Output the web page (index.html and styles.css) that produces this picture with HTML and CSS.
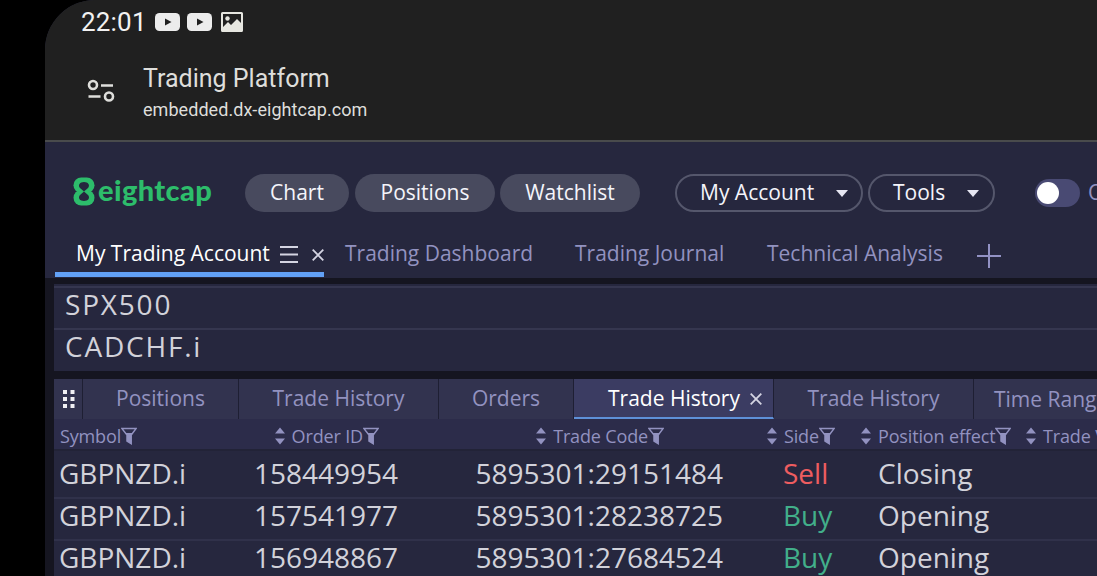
FILE: index.html
```html
<!DOCTYPE html>
<html lang="en">
<head>
  <meta charset="UTF-8">
  <title>Trading Platform</title>
  <link rel="stylesheet" href="styles.css">
</head>
<body>

  <svg class="defs" width="0" height="0">
    <symbol id="filter" viewBox="0 0 16 18">
      <path d="M1 1.6h14L10.2 8v8.6L6 14V8z" fill="none" stroke="currentColor" stroke-width="1.5"/>
      <path d="M4.2 6h7.6L10.2 8.3v8.3L6 14V8.3z" fill="currentColor"/>
    </symbol>
    <symbol id="sort" viewBox="0 0 10 18">
      <path d="M5 .5L10 6.5H0zM5 17.5L10 11.5H0z" fill="currentColor"/>
    </symbol>
    <symbol id="close" viewBox="0 0 12 12">
      <path d="M.7.7l10.6 10.6M11.3.7L.7 11.3" stroke="currentColor" stroke-width="1.8"/>
    </symbol>
    <symbol id="video" viewBox="0 0 25 18">
      <rect width="25" height="18" rx="4.5" fill="#ececec"/>
      <path d="M10 5.5l6.5 3.5-6.5 3.5z" fill="#202020"/>
    </symbol>
  </svg>

  <div class="screen">
    <header class="browser">
      <div class="status">
        <span class="time">22:01</span>
        <svg width="25" height="18"><use href="#video"/></svg>
        <svg width="25" height="18"><use href="#video"/></svg>
        <svg class="photo" width="22" height="20" viewBox="0 0 22 20">
          <path d="M1.5 0h19A1.5 1.5 0 0 1 22 1.5v17A1.5 1.5 0 0 1 20.5 20h-19A1.5 1.5 0 0 1 0 18.5v-17A1.5 1.5 0 0 1 1.5 0zM2 2v13l5-5 3 3 6-6 4 4V2z" fill="#e6e6e0" fill-rule="evenodd"/>
          <circle cx="6.5" cy="6.5" r="2.2" fill="#e6e6e0"/>
        </svg>
      </div>
      <div class="address">
        <svg width="28" height="24" viewBox="0 0 28 24" fill="none" stroke="#dededb" stroke-width="2.6">
          <circle cx="6" cy="6" r="4"/>
          <path d="M14 6.5h12M1.5 17.5h12"/>
          <circle cx="22" cy="17.5" r="4"/>
        </svg>
        <div>
          <div class="page-title">Trading Platform</div>
          <div class="page-url">embedded.dx-eightcap.com</div>
        </div>
      </div>
    </header>

    <nav class="toolbar">
      <div class="logo">
        <svg width="22" height="29" viewBox="0 0 22 29">
          <rect x="0.5" y="0.5" width="21" height="15.5" rx="7.7" fill="#2dbd6b"/>
          <rect x="0.5" y="13" width="21" height="15.5" rx="7.7" fill="#2dbd6b"/>
          <path d="M11 14.5L7 11C4.500 8 7 5 11 5s6.500 3 4 6zM11 14.500L7 18C4.500 21 7 24 11 24s6.500-3 4-6z" fill="#26273e"/>
        </svg>
        <span class="logo-text">eightcap</span>
      </div>
      <div class="pill chart">Chart</div>
      <div class="pill">Positions</div>
      <div class="pill">Watchlist</div>
      <div class="pill outline account">My Account <i class="caret"></i></div>
      <div class="pill outline tools">Tools <i class="caret"></i></div>
      <div class="toggle"></div>
      <span class="toggle-label">O</span>
    </nav>

    <nav class="tabs">
      <div class="tab active">
        <span class="tab-name">My Trading Account</span>
        <svg class="menu" width="18" height="17" viewBox="0 0 18 17" stroke="#d4d4e2" stroke-width="1.8"><path d="M0 1h18M0 8.5h18M0 16h18"/></svg>
        <svg class="close" width="12" height="12"><use href="#close"/></svg>
      </div>
      <div class="tab dashboard">Trading Dashboard</div>
      <div class="tab journal">Trading Journal</div>
      <div class="tab analysis">Technical Analysis</div>
      <svg class="plus" width="24" height="24" viewBox="0 0 24 24" stroke="#9292c4" stroke-width="2"><path d="M12 0v24M0 12h24"/></svg>
    </nav>

    <main class="workspace">
      <section class="panel watchlist">
        <div class="symbol">SPX500</div>
        <div class="symbol">CADCHF.i</div>
      </section>

      <section class="panel history">
        <div class="panel-tabs">
          <div class="panel-tab grip"><svg width="12" height="18" viewBox="0 0 12 18" fill="#f0f0f4"><path d="M0 0h4v4H0zM7.5 0h4v4h-4zM0 7h4v4H0zM7.5 7h4v4h-4zM0 14h4v4H0zM7.5 14h4v4h-4z"/></svg></div>
          <div class="panel-tab positions">Positions</div>
          <div class="panel-tab wide">Trade History</div>
          <div class="panel-tab orders">Orders</div>
          <div class="panel-tab wide active">Trade History <svg width="12" height="12"><use href="#close"/></svg></div>
          <div class="panel-tab wide">Trade History</div>
          <div class="panel-tab range">Time Rang</div>
        </div>

        <div class="grid head">
          <div>Symbol<svg class="filter"><use href="#filter"/></svg></div>
          <div class="num id"><svg class="sort"><use href="#sort"/></svg>Order ID<svg class="filter"><use href="#filter"/></svg></div>
          <div class="num code"><svg class="sort"><use href="#sort"/></svg>Trade Code<svg class="filter"><use href="#filter"/></svg></div>
          <div><svg class="sort"><use href="#sort"/></svg>Side<svg class="filter"><use href="#filter"/></svg></div>
          <div class="effect"><svg class="sort"><use href="#sort"/></svg>Position effect<svg class="filter"><use href="#filter"/></svg></div>
          <div><svg class="sort"><use href="#sort"/></svg>Trade V</div>
        </div>
        <div class="grid row">
          <div>GBPNZD.i</div><div class="num id">158449954</div><div class="num code">5895301:29151484</div><div class="side sell">Sell</div><div class="effect">Closing</div>
        </div>
        <div class="grid row">
          <div>GBPNZD.i</div><div class="num id">157541977</div><div class="num code">5895301:28238725</div><div class="side buy">Buy</div><div class="effect">Opening</div>
        </div>
        <div class="grid row">
          <div>GBPNZD.i</div><div class="num id">156948867</div><div class="num code">5895301:27684524</div><div class="side buy">Buy</div><div class="effect">Opening</div>
        </div>
      </section>
    </main>
  </div>

</body>
</html>
```
FILE: styles.css
```css
* {
  box-sizing: border-box;
}
body {
  margin: 0;
  height: 576px;
  overflow: hidden;
  background: #000;
  font-family: "Open Sans", "Noto Sans", sans-serif;
  white-space: nowrap;
}
svg {
  display: block;
  flex: none;
}
.defs {
  position: absolute;
}
.screen {
  margin-left: 45px;
  height: 576px;
  overflow: hidden;
  background: #26273e;
  border-top-left-radius: 50px;
}

/* browser bar */
.browser {
  height: 142px;
  background: #202020;
  border-bottom: 2px solid #494b4c;
  font-family: Roboto, sans-serif;
  color: #dededb;
}
.status {
  display: flex;
  align-items: center;
  height: 44px;
  padding-left: 36px;
}
.status svg { margin-right: 7px; }
.status .photo { margin-left: 2px; }
.time {
  width: 74px;
  font-size: 26px;
  letter-spacing: 0.2px;
  color: #f2f2f2;
}
.address {
  display: flex;
  padding: 20px 0 0 42px;
}
.address svg {
  margin: 15px 28px 0 0;
}
.page-title {
  font-size: 25px;
  line-height: 30px;
}
.page-url {
  font-size: 18px;
  line-height: 32px;
  letter-spacing: 0.05px;
}

/* toolbar */
.toolbar {
  display: flex;
  align-items: center;
  height: 102px;
  padding-left: 28px;
}
.logo {
  display: flex;
  align-items: center;
  flex: none;
  width: 172px;
  padding-bottom: 4px;
}
.logo-text {
  margin: -3px 0 0 3px;
  font-family: Lato, sans-serif;
  font-size: 29px;
  font-weight: 900;
  letter-spacing: 0.4px;
  color: #2dbd6b;
}
.pill {
  display: flex;
  justify-content: center;
  align-items: center;
  flex: none;
  width: 140px;
  height: 38px;
  margin-right: 5px;
  padding-bottom: 3px;
  border-radius: 19px;
  background: #484a5e;
  color: #f4f4fa;
  font-size: 21px;
}
.pill.chart {
  width: 104px;
  margin-right: 6px;
}
.pill.outline {
  justify-content: space-between;
  background: none;
  border: 2px solid #55576c;
}
.pill.account {
  width: 188px;
  margin-left: 30px;
  padding-left: 23px;
  padding-right: 13px;
}
.pill.tools {
  width: 127px;
  padding-left: 23px;
  padding-right: 14px;
}
.caret {
  margin-top: 3px;
  border: 6px solid transparent;
  border-top: 7px solid #e6e6f2;
  border-bottom: 0;
}
.toggle {
  flex: none;
  width: 45px;
  height: 28px;
  margin: 0 8px 0 35px;
  padding: 3px 2px;
  border-radius: 14px;
  background: #494a73;
}
.toggle::before {
  content: "";
  display: block;
  width: 22px;
  height: 22px;
  border-radius: 50%;
  background: #fff;
}
.toggle-label {
  margin-top: -3px;
  font-size: 21px;
  color: #9292c0;
}

/* page tabs */
.tabs {
  display: flex;
  height: 34px;
  padding-left: 10px;
  font-size: 21px;
  line-height: 18px;
  color: #9292c0;
}
.tab.active {
  display: flex;
  width: 269px;
  height: 33px;
  padding-left: 21px;
  border-bottom: 5px solid #62a1f6;
  color: #fff;
}
.tab-name { width: 204px; }
.menu { margin-top: 2px; }
.tab .close {
  margin: 5px 0 0 14px;
  color: #d4d4e2;
}
.tab.dashboard {
  width: 230px;
  margin-left: 21px;
}
.tab.journal { width: 192px; }
.tab.analysis { width: 210px; }

/* panels */
.workspace {
  height: 298px;
  padding: 6px 0 0 9px;
  background: #151520;
}
.panel {
  background: #26273e;
}
.watchlist {
  height: 87px;
  padding-top: 2px;
  margin-bottom: 8px;
}
.symbol {
  height: 42px;
  padding-left: 11px;
  border-top: 2px solid #35364f;
  font-size: 28px;
  line-height: 33px;
  letter-spacing: 1.8px;
  color: #d2d2da;
}
.panel-tabs {
  display: flex;
  height: 40px;
}
.panel-tab {
  display: flex;
  align-items: center;
  justify-content: center;
  flex: none;
  padding-bottom: 2px;
  border-right: 1px solid #1e1f33;
  background: #32334f;
  color: #9292c0;
  font-size: 21px;
  line-height: 36px;
}
.panel-tab.grip {
  width: 29px;
  padding: 0 0 0 1px;
}
.panel-tab.positions { width: 156px; }
.panel-tab.wide { width: 200px; }
.panel-tab.orders { width: 135px; }
.panel-tab.range {
  width: 124px;
  justify-content: flex-start;
  padding: 0 0 0 20px;
}
.panel-tab.active {
  justify-content: flex-start;
  padding: 0 0 0 34px;
  border-bottom: 2px solid #5e90d8;
  background: #3b3c62;
  color: #fff;
}
.panel-tab.active svg {
  margin: 2px 0 0 10px;
  color: #d4d4e2;
}
.grid {
  display: grid;
  grid-template-columns: 180px 159px 369px 94px 165px 71px;
}
.grid > div {
  display: flex;
}
.grid .num {
  justify-content: flex-end;
}
.head {
  height: 32px;
  padding-left: 5px;
  background: #2c2c4a;
  border-bottom: 2px solid #222337;
  color: #9292c0;
  font-size: 18px;
  line-height: 34px;
  letter-spacing: -0.15px;
}
.head > div:first-child { padding-left: 1px; }
.head .id { padding-right: 19px; }
.head .code { padding-right: 103px; }
.row .code { padding-right: 44px; }
.filter {
  width: 16px;
  height: 18px;
  margin-top: 8px;
}
.sort {
  width: 10px;
  height: 18px;
  margin: 8px 7px 0 0;
}
.row {
  height: 42px;
  padding-left: 5px;
  border-top: 2px solid #30314a;
  color: #d2d2da;
  font-size: 28px;
  line-height: 33px;
}
.head + .row {
  height: 46px;
  padding-top: 6px;
  border-top: 0;
}
.row .side { padding-left: 16px; }
.row .effect { padding-left: 17px; }
.row .sell { color: #ee5d60; }
.row .buy { color: #42af8a; }
```
